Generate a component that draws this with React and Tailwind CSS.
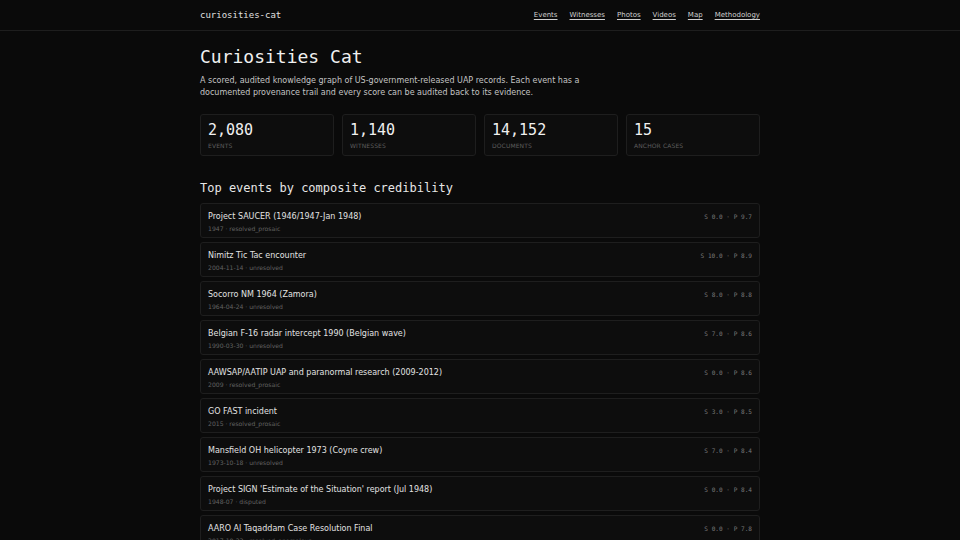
import React from 'react';

const stats = [
  { value: '2,080', label: 'Events' },
  { value: '1,140', label: 'Witnesses' },
  { value: '14,152', label: 'Documents' },
  { value: '15', label: 'Anchor cases' },
];

const events = [
  { title: 'Project SAUCER (1946/1947-Jan 1948)', date: '1947', status: 'resolved_prosaic', s: '0.0', p: '9.7' },
  { title: 'Nimitz Tic Tac encounter', date: '2004-11-14', status: 'unresolved', s: '10.0', p: '8.9' },
  { title: 'Socorro NM 1964 (Zamora)', date: '1964-04-24', status: 'unresolved', s: '8.0', p: '8.8' },
  { title: 'Belgian F-16 radar intercept 1990 (Belgian wave)', date: '1990-03-30', status: 'unresolved', s: '7.0', p: '8.6' },
  { title: 'AAWSAP/AATIP UAP and paranormal research (2009-2012)', date: '2009', status: 'resolved_prosaic', s: '0.0', p: '8.6' },
  { title: 'GO FAST incident', date: '2015', status: 'resolved_prosaic', s: '3.0', p: '8.5' },
  { title: 'Mansfield OH helicopter 1973 (Coyne crew)', date: '1973-10-18', status: 'unresolved', s: '7.0', p: '8.4' },
  { title: "Project SIGN 'Estimate of the Situation' report (Jul 1948)", date: '1948-07', status: 'disputed', s: '0.0', p: '8.4' },
  { title: 'AARO Al Taqaddam Case Resolution Final', date: '2017-10-23', status: 'resolved_anomalous', s: '0.0', p: '7.8' },
];

const nav = ['Events', 'Witnesses', 'Photos', 'Videos', 'Map', 'Methodology'];

const mono = { fontFamily: '"DejaVu Sans Mono", monospace' };

export default function App() {
  return (
    <div className="min-h-screen bg-[#0a0a0a] text-[#e6e6e6]" style={{ fontFamily: '"DejaVu Sans", sans-serif' }}>
      <header className="border-b border-[#1e1e1e]">
        <div className="mx-auto flex h-[30px] w-[560px] items-center justify-between">
          <span className="pt-[2px] text-[9px] text-[#e0e0e0]" style={mono}>curiosities-cat</span>
          <nav className="flex gap-[12px] pt-[1px] text-[7px] text-[#cfcfcf]">
            {nav.map((n) => (
              <a key={n} href="#" className="underline underline-offset-2">{n}</a>
            ))}
          </nav>
        </div>
      </header>

      <main className="mx-auto w-[560px] pt-[14px]">
        <h1 className="text-[18px] leading-[24px] text-[#f0f0f0]" style={mono}>Curiosities Cat</h1>
        <p className="mt-[6px] w-[400px] text-[8px] leading-[12px] text-[#c4c4c4]">
          A scored, audited knowledge graph of US-government-released UAP records. Each event has a
          documented provenance trail and every score can be audited back to its evidence.
        </p>

        <div className="mt-[15px] grid grid-cols-4 gap-[8px]">
          {stats.map((s) => (
            <div key={s.label} className="h-[42px] rounded-[3px] border border-[#1e1e1e] bg-[#0d0d0d] px-[7px] pt-[6px]">
              <div className="text-[15px] leading-[18px] text-[#f0f0f0]" style={mono}>{s.value}</div>
              <div className="mt-[2px] text-[6px] uppercase tracking-[0.02em] text-[#5e5e5e]">{s.label}</div>
            </div>
          ))}
        </div>

        <h2 className="mt-[24px] text-[12px] leading-[16px] text-[#e6e6e6]" style={mono}>
          Top events by composite credibility
        </h2>

        <div className="mt-[7px] flex flex-col gap-[4px]">
          {events.map((e) => (
            <div key={e.title} className="flex h-[35px] items-start justify-between rounded-[3px] border border-[#1e1e1e] bg-[#0d0d0d] px-[7px] pt-[7px]">
              <div>
                <div className="text-[8px] leading-[12px] text-[#e2e2e2]">{e.title}</div>
                <div className="mt-[1px] text-[6.1px] leading-[9px] text-[#626262]">{e.date} · {e.status}</div>
              </div>
              <div className="pt-[1px] text-[6.1px] text-[#787878]" style={mono}>S {e.s} · P {e.p}</div>
            </div>
          ))}
        </div>
      </main>
    </div>
  );
}
